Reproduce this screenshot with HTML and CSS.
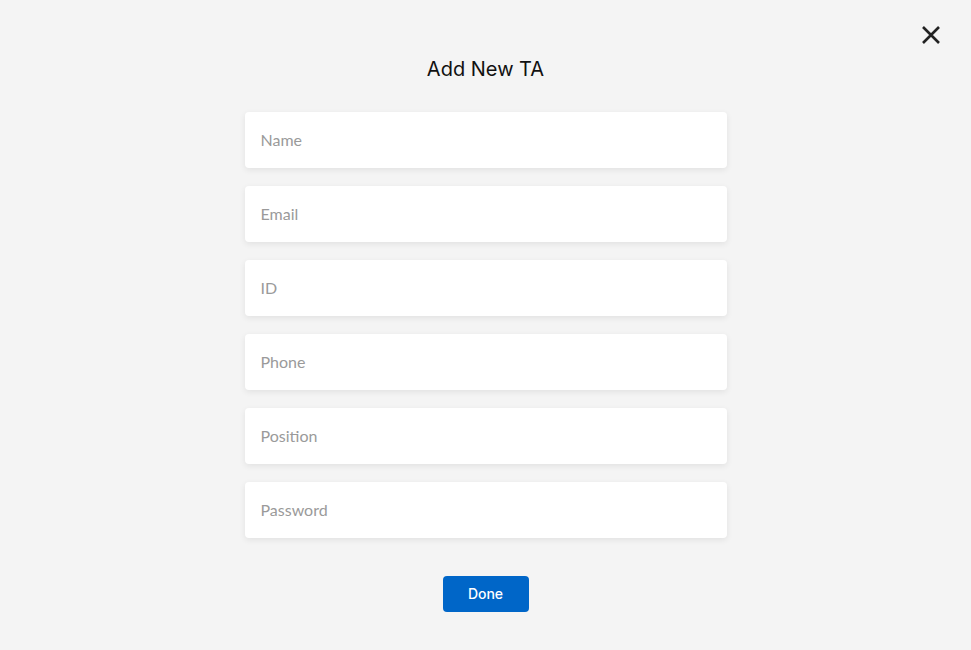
FILE: index.html
```html
<!DOCTYPE html>
<html>
<head>
<meta charset="utf-8">
<link rel="stylesheet" href="styles.css">
</head>
<body>
<button class="close" aria-label="Close">
  <svg width="20" height="20" viewBox="0 0 20 20"><path d="M2 2 L18 18 M18 2 L2 18" stroke="#222" stroke-width="2.6" stroke-linecap="butt" fill="none"/></svg>
</button>
<main class="form">
  <h1 class="title">Add New TA</h1>
  <div class="fields">
    <input class="field" type="text" placeholder="Name">
    <input class="field" type="text" placeholder="Email">
    <input class="field" type="text" placeholder="ID">
    <input class="field" type="text" placeholder="Phone">
    <input class="field" type="text" placeholder="Position">
    <input class="field" type="password" placeholder="Password">
  </div>
  <button class="done">Done</button>
</main>
</body>
</html>
```
FILE: styles.css
```css
html, body {
  margin: 0;
  padding: 0;
  background: #f4f4f4;
  height: 100%;
}
body {
  font-family: Inter, "Liberation Sans", sans-serif;
  position: relative;
}
.close {
  position: absolute;
  top: 25px;
  left: 921px;
  width: 20px;
  height: 20px;
  padding: 0;
  border: 0;
  background: none;
  display: block;
}
.close svg { display: block; }
.form {
  display: flex;
  flex-direction: column;
  align-items: center;
  padding-top: 57px;
}
.title {
  margin: 0;
  font-size: 20px;
  line-height: 24px;
  font-weight: 400;
  color: #111;
}
.fields {
  margin-top: 31px;
  display: flex;
  flex-direction: column;
  gap: 18px;
  width: 482px;
}
.field {
  box-sizing: border-box;
  width: 100%;
  height: 56px;
  border: 0;
  border-radius: 4px;
  background: #fff;
  box-shadow: 0 2px 6px rgba(0,0,0,0.08);
  padding: 0 16px 2px;
  font-family: Lato, "Liberation Sans", sans-serif;
  font-size: 16px;
  color: #333;
  outline: none;
}
.field::placeholder {
  color: #9a9a9a;
}
.done {
  margin-top: 38px;
  width: 86px;
  height: 36px;
  border: 0;
  border-radius: 4px;
  background: #0066c8;
  color: #fff;
  font-family: Inter, "Liberation Sans", sans-serif;
  font-size: 14px;
  font-weight: 500;
  padding: 0 0 1px;
}
```
